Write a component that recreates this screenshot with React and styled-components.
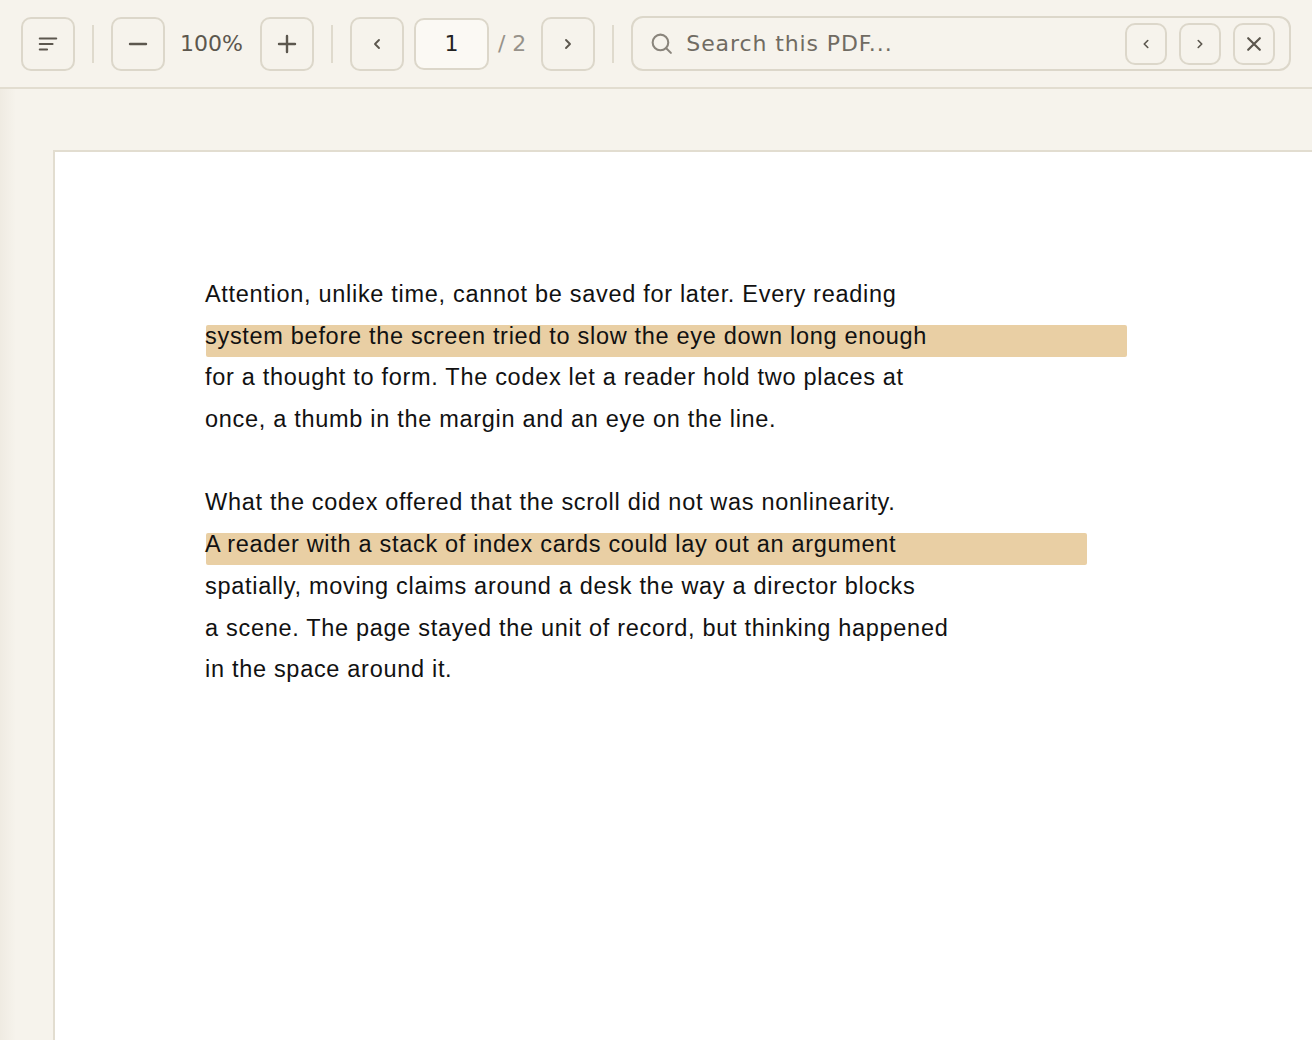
import React from "react";
import styled, { createGlobalStyle } from "styled-components";

const Global = createGlobalStyle`
  html, body { margin: 0; padding: 0; background: #f6f3ec; overflow: hidden; }
  * { box-sizing: border-box; }
`;

const Shell = styled.div`
  width: 1312px; height: 1040px; display: flex; flex-direction: column;
  background: linear-gradient(to right, #efebe2 0px, #f6f3ec 16px);
  font-family: "DejaVu Sans", sans-serif;
`;
const Toolbar = styled.div`
  height: 89px; flex: none; display: flex; align-items: center; gap: 0;
  padding: 0 21px; border-bottom: 2px solid #e2ddd0; background: #f6f3ec;
`;
const Btn = styled.button`
  width: ${p => p.$s || 54}px; height: ${p => p.$s || 54}px; flex: none;
  border: 2px solid #dcd7ca; border-radius: 10px; background: transparent;
  display: flex; align-items: center; justify-content: center; padding: 0; color: #5c574e;
`;
const Sep = styled.div`
  width: 2px; height: 38px; background: #dfdacd; margin: 0 17px;
`;
const Zoom = styled.span`
  font-size: 22px; color: #5c574e; margin: 0 17px 0 15px;
`;
const PageInput = styled.div`
  width: 75px; height: 52px; margin-left: 10px; border: 2px solid #dcd7ca; border-radius: 10px;
  background: #fbf9f4; display: flex; align-items: center; justify-content: center;
  font-size: 22px; color: #222;
`;
const Total = styled.span`
  font-size: 22px; color: #97928a; margin: 0 15px 0 9px;
`;
const Search = styled.div`
  flex: 1; height: 55px; border: 2px solid #dcd7ca; border-radius: 12px;
  display: flex; align-items: center; padding: 0 14px 0 16px; gap: 12px;
`;
const SearchText = styled.span`
  flex: 1; font-size: 22px; color: #706b62; letter-spacing: 0.9px;
`;
const SmallBtns = styled.div` display: flex; gap: 12px; `;
const Viewer = styled.div`
  flex: 1; padding: 61px 0 0 53px; overflow: hidden;
`;
const Page = styled.div`
  width: 1300px; height: 900px; background: #fff; border: 2px solid #e2ddd0; border-right: none;
  padding: 122px 0 0 150px;
  font-family: "Liberation Sans", Arial, sans-serif; font-size: 23.5px; letter-spacing: 0.7px; color: #111;
`;
const Para = styled.div` margin-bottom: 41.7px; `;
const Line = styled.div`
  height: 41.7px; line-height: 41.7px; white-space: nowrap; position: relative;
`;
const Hl = styled.div`
  position: absolute; left: 1px; top: 9px; height: 32px; width: ${p => p.$w}px;
  background: #e9cfa4; border-radius: 2px; z-index: 0;
`;
const T = styled.span` position: relative; z-index: 1; `;

const Chev = ({ d, s = 16 }) => (
  <svg width={s} height={s} viewBox="0 0 24 24" fill="none" stroke="#5c574e" strokeWidth="2.8" strokeLinecap="round" strokeLinejoin="round">
    <path d={d === "l" ? "M15 6l-6 6 6 6" : "M9 6l6 6-6 6"} />
  </svg>
);

const L = ({ children, hl }) => (
  <Line>{hl && <Hl $w={hl} />}<T>{children}</T></Line>
);

export default function App() {
  return (
    <Shell>
      <Global />
      <Toolbar>
        <Btn>
          <svg width="22" height="22" viewBox="0 0 24 24" fill="none" stroke="#5c574e" strokeWidth="2.2" strokeLinecap="round">
            <path d="M3 6h18M3 12h14M3 18h8" />
          </svg>
        </Btn>
        <Sep />
        <Btn>
          <svg width="24" height="24" viewBox="0 0 24 24" stroke="#5c574e" strokeWidth="2.4" strokeLinecap="round"><path d="M4 12h16" /></svg>
        </Btn>
        <Zoom>100%</Zoom>
        <Btn>
          <svg width="24" height="24" viewBox="0 0 24 24" stroke="#5c574e" strokeWidth="2.4" strokeLinecap="round"><path d="M4 12h16M12 4v16" /></svg>
        </Btn>
        <Sep />
        <Btn><Chev d="l" /></Btn>
        <PageInput>1</PageInput>
        <Total>/ 2</Total>
        <Btn><Chev d="r" /></Btn>
        <Sep />
        <Search>
          <svg width="25" height="25" viewBox="0 0 24 24" fill="none" stroke="#8a857c" strokeWidth="2" strokeLinecap="round">
            <circle cx="11" cy="11" r="7.5" /><path d="M16.5 16.5l4.5 4.5" />
          </svg>
          <SearchText>Search this PDF...</SearchText>
          <SmallBtns>
            <Btn $s={42}><Chev d="l" s={14} /></Btn>
            <Btn $s={42}><Chev d="r" s={14} /></Btn>
            <Btn $s={42}>
              <svg width="20" height="20" viewBox="0 0 24 24" stroke="#5c574e" strokeWidth="2.6" strokeLinecap="round"><path d="M5 5l14 14M19 5L5 19" /></svg>
            </Btn>
          </SmallBtns>
        </Search>
      </Toolbar>
      <Viewer>
        <Page>
          <Para>
            <L>Attention, unlike time, cannot be saved for later. Every reading</L>
            <L hl={921}>system before the screen tried to slow the eye down long enough</L>
            <L>for a thought to form. The codex let a reader hold two places at</L>
            <L>once, a thumb in the margin and an eye on the line.</L>
          </Para>
          <Para>
            <L>What the codex offered that the scroll did not was nonlinearity.</L>
            <L hl={881}>A reader with a stack of index cards could lay out an argument</L>
            <L>spatially, moving claims around a desk the way a director blocks</L>
            <L>a scene. The page stayed the unit of record, but thinking happened</L>
            <L>in the space around it.</L>
          </Para>
        </Page>
      </Viewer>
    </Shell>
  );
}
